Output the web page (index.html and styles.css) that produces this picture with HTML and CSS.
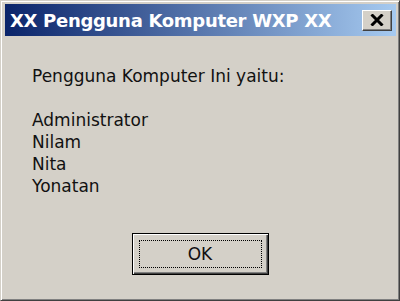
FILE: index.html
```html
<!DOCTYPE html>
<html lang="id">
<head>
    <meta charset="UTF-8">
    <meta name="viewport" content="width=device-width, initial-scale=1.0">
    <title>XX Pengguna Komputer WXP XX</title>
    <link rel="stylesheet" href="styles.css">
</head>
<body>
    <div class="window">
        <div class="titlebar">
            <span class="title">XX Pengguna Komputer WXP XX</span>
            <button class="close-btn" aria-label="Tutup">
                <svg width="14" height="12" viewBox="0 0 14 12">
                    <path d="M1.5 0.5 L12.5 11.5 M12.5 0.5 L1.5 11.5" stroke="#000" stroke-width="3"/>
                </svg>
            </button>
        </div>

        <div class="content">
            <div class="message">
                <p>Pengguna Komputer Ini yaitu:</p>
                <p>&nbsp;</p>
                <p>Administrator</p>
                <p>Nilam</p>
                <p>Nita</p>
                <p>Yonatan</p>
            </div>

            <div class="actions">
                <button class="ok-btn"><span class="focus">OK</span></button>
            </div>
        </div>
    </div>
</body>
</html>
```

FILE: styles.css
```css
body {
    margin: 0;
    padding: 0;
    background: #d4d0c8;
    font-family: 'DejaVu Sans', Verdana, sans-serif;
}

.window {
    box-sizing: border-box;
    width: 400px;
    height: 301px;
    background: #d4d0c8;
    border: 1px solid;
    border-color: #d4d0c8 #404040 #404040 #d4d0c8;
    box-shadow: inset 1px 1px #fff, inset -1px -1px #808080;
    padding: 3px;
    display: flex;
    flex-direction: column;
}

.titlebar {
    height: 32px;
    margin-left: 1px;
    display: flex;
    align-items: center;
    justify-content: space-between;
    padding: 0 4px 0 5px;
    background: linear-gradient(to right, #0a246a, #a6caf0);
}

.title {
    color: #fff;
    font-weight: bold;
    font-size: 18px;
    letter-spacing: -0.3px;
    white-space: nowrap;
}

.close-btn {
    box-sizing: border-box;
    width: 30px;
    height: 21px;
    padding: 0;
    background: #d4d0c8;
    border: 1px solid;
    border-color: #fff #404040 #404040 #fff;
    box-shadow: inset -1px -1px #808080;
    display: flex;
    align-items: center;
    justify-content: center;
}

.content {
    flex: 1;
    padding: 29px 28px 0 28px;
    display: flex;
    flex-direction: column;
}

.message p {
    margin: 0;
    font-size: 17px;
    line-height: 22px;
    color: #111;
}

.actions {
    display: flex;
    justify-content: center;
    margin-top: 36px;
}

.ok-btn {
    box-sizing: border-box;
    width: 137px;
    height: 42px;
    padding: 0;
    background: #d4d0c8;
    border: 1px solid #000;
    box-shadow: inset 1px 1px #fff, inset -1px -1px #404040, inset -2px -2px #808080;
    display: flex;
    align-items: stretch;
    font-family: 'DejaVu Sans', Verdana, sans-serif;
}

.focus {
    flex: 1;
    margin: 6px;
    border: 1px dotted #000;
    display: flex;
    align-items: center;
    justify-content: center;
    font-size: 17px;
    color: #111;
}
```
